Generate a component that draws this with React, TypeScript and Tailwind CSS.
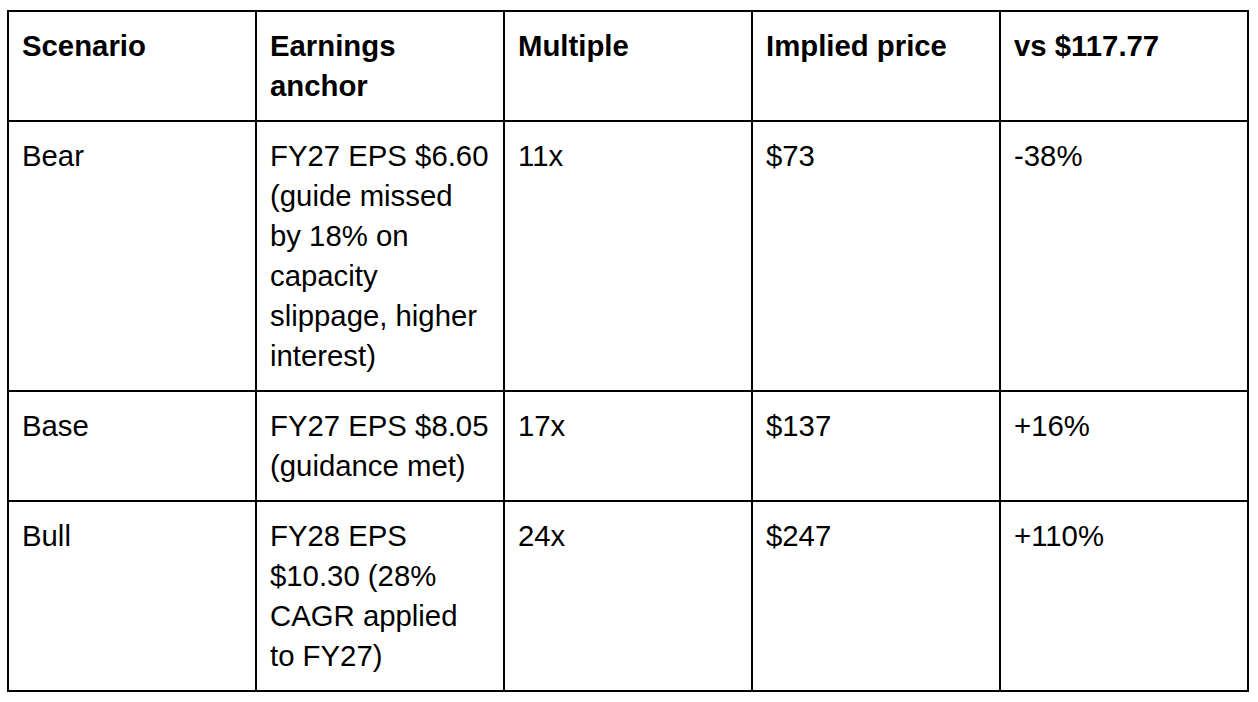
const header = ["Scenario", "Earnings anchor", "Multiple", "Implied price", "vs $117.77"];

const rows = [
  ["Bear", "FY27 EPS $6.60 (guide missed by 18% on capacity slippage, higher interest)", "11x", "$73", "-38%"],
  ["Base", "FY27 EPS $8.05 (guidance met)", "17x", "$137", "+16%"],
  ["Bull", "FY28 EPS $10.30 (28% CAGR applied to FY27)", "24x", "$247", "+110%"],
];

export default function App() {
  return (
    <div className="min-h-screen bg-white pt-[10px] pl-[7px] text-black font-['Liberation_Sans',Arial,sans-serif]">
      <table className="table-fixed w-[1242px] border-separate border-spacing-0 border-l-2 border-t-2 border-black text-[29.33px] leading-[40px]">
        <thead>
          <tr>
            {header.map((h) => (
              <th
                key={h}
                className="border-r-2 border-b-2 border-black pl-[13px] pr-[14px] py-[14px] text-left align-top font-bold"
              >
                {h}
              </th>
            ))}
          </tr>
        </thead>
        <tbody>
          {rows.map((row) => (
            <tr key={row[0]}>
              {row.map((cell, i) => (
                <td
                  key={i}
                  className="border-r-2 border-b-2 border-black pl-[13px] pr-[14px] py-[14px] align-top"
                >
                  {cell}
                </td>
              ))}
            </tr>
          ))}
        </tbody>
      </table>
    </div>
  );
}
